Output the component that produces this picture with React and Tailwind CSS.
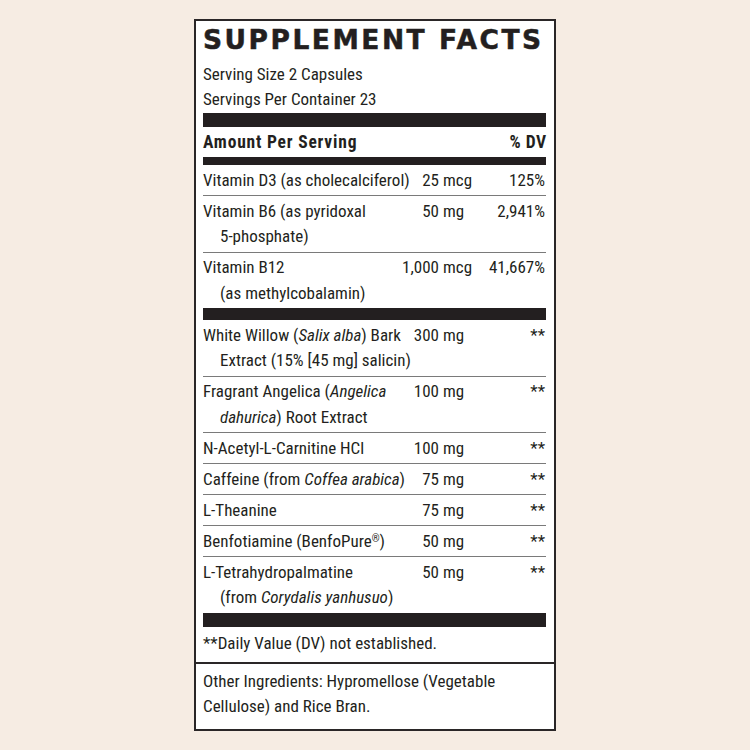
import React from "react";

const rowCls = "flex items-start pt-[2.5px] pb-[2px] leading-[25.5px]";

function Row({ lines, num, unit, dv, border = true }) {
  return (
    <div className={rowCls + (border ? " border-b border-[#7a7a7a]" : "")}>
      <div className="w-[192px] shrink-0 whitespace-nowrap">
        {lines.map((l, i) => (
          <div key={i} className={i > 0 ? "pl-[17px]" : ""}>
            {l}
          </div>
        ))}
      </div>
      <div className="w-[44px] shrink-0 text-right whitespace-nowrap">{num}</div>
      <div className="w-[34px] shrink-0 pl-[4px] whitespace-nowrap">{unit}</div>
      <div className="flex-1 text-right whitespace-nowrap pr-[1px]">{dv}</div>
    </div>
  );
}

export default function App() {
  return (
    <div className="min-h-[750px] w-full bg-[#f6ece3] pt-[19px] font-['Roboto_Condensed','Roboto',sans-serif] text-[17px] text-[#231f20]">
      <div className="mx-auto w-[362px] h-[712px] border-2 border-[#2a2627] bg-white pl-[7px] pr-[8px]">
        <div className="mt-[1px] font-['DejaVu_Sans',sans-serif] font-bold text-[26.5px] leading-[36px] tracking-[2.5px] whitespace-nowrap [-webkit-text-stroke:0.5px_#231f20]">
          SUPPLEMENT FACTS
        </div>
        <div className="mt-[4px] leading-[25px]">
          <div>Serving Size 2 Capsules</div>
          <div>Servings Per Container 23</div>
        </div>
        <div className="mt-[1px] h-[14px] bg-[#231f20]" />
        <div className="flex justify-between pt-[3px] leading-[25px] font-bold text-[17.5px] tracking-[0.8px]">
          <span>Amount Per Serving</span>
          <span className="tracking-[0.5px] mr-[-0.5px]">% DV</span>
        </div>
        <div className="mt-[2px] h-[8px] bg-[#231f20]" />
        <Row lines={["Vitamin D3 (as cholecalciferol)"]} num="25" unit="mcg" dv="125%" />
        <Row lines={["Vitamin B6 (as pyridoxal", "5-phosphate)"]} num="50" unit="mg" dv="2,941%" />
        <Row
          lines={["Vitamin B12", "(as methylcobalamin)"]}
          num="1,000"
          unit="mcg"
          dv="41,667%"
          border={false}
        />
        <div className="h-[12px] bg-[#231f20]" />
        <Row
          lines={[
            <>
              White Willow (<i>Salix alba</i>) Bark
            </>,
            "Extract (15% [45 mg] salicin)",
          ]}
          num="300"
          unit="mg"
          dv="**"
        />
        <Row
          lines={[
            <>
              Fragrant Angelica (<i>Angelica</i>
            </>,
            <>
              <i>dahurica</i>) Root Extract
            </>,
          ]}
          num="100"
          unit="mg"
          dv="**"
        />
        <Row lines={["N-Acetyl-L-Carnitine HCl"]} num="100" unit="mg" dv="**" />
        <Row
          lines={[
            <>
              Caffeine (from <i>Coffea arabica</i>)
            </>,
          ]}
          num="75"
          unit="mg"
          dv="**"
        />
        <Row lines={["L-Theanine"]} num="75" unit="mg" dv="**" />
        <Row
          lines={[
            <>
              Benfotiamine (BenfoPure<sup className="text-[10px]">®</sup>)
            </>,
          ]}
          num="50"
          unit="mg"
          dv="**"
        />
        <Row
          lines={[
            "L-Tetrahydropalmatine",
            <>
              (from <i>Corydalis yanhusuo</i>)
            </>,
          ]}
          num="50"
          unit="mg"
          dv="**"
          border={false}
        />
        <div className="h-[14px] bg-[#231f20]" />
        <div className="pt-[4.5px] pb-[5.5px] leading-[25px]">**Daily Value (DV) not established.</div>
        <div className="-ml-[7px] -mr-[8px] h-[2px] bg-[#2a2627]" />
        <div className="pt-[5.5px] leading-[24.5px]">
          <div>Other Ingredients: Hypromellose (Vegetable</div>
          <div>Cellulose) and Rice Bran.</div>
        </div>
      </div>
    </div>
  );
}
